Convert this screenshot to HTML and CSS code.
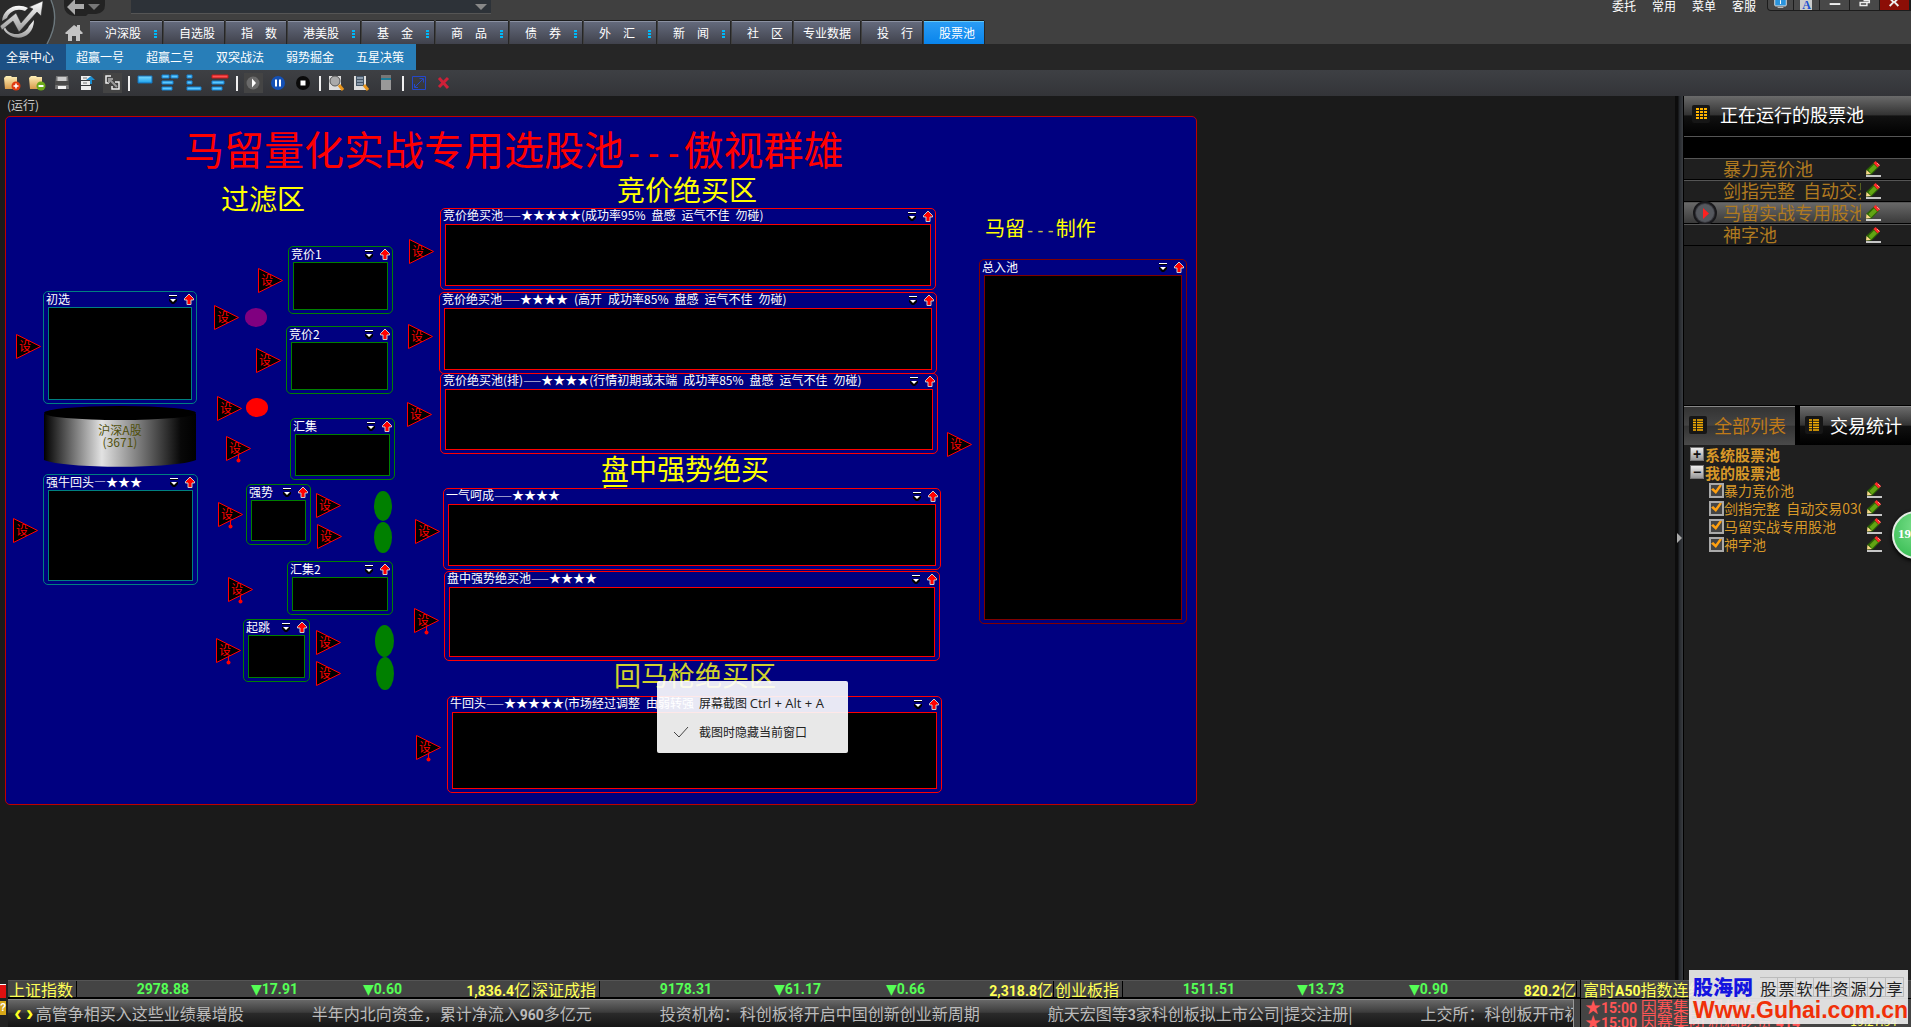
FILE: index.html
```html
<!DOCTYPE html>
<html lang="zh-CN">
<head>
<meta charset="utf-8">
<title>股票池</title>
<link rel="stylesheet" href="styles.css">
</head>
<body>
<svg class="defs" aria-hidden="true">
  <defs>
    <linearGradient id="silver" x1="0" y1="0" x2="0" y2="1"><stop offset="0" stop-color="#fff"/><stop offset="1" stop-color="#999"/></linearGradient>
    <linearGradient id="folder" x1="0" y1="0" x2="0" y2="1"><stop offset="0" stop-color="#fff0b8"/><stop offset="1" stop-color="#d89a4a"/></linearGradient>
    <linearGradient id="sky" x1="0" y1="0" x2="0" y2="1"><stop offset="0" stop-color="#7fdcff"/><stop offset="1" stop-color="#1aa0ec"/></linearGradient>
    <linearGradient id="drum" x1="0" y1="0" x2="1" y2="0"><stop offset="0" stop-color="#000"/><stop offset=".38" stop-color="#e2e2e2"/><stop offset=".9" stop-color="#080808"/><stop offset="1" stop-color="#000"/></linearGradient>
    <symbol id="pencil" viewBox="0 0 16 16"><path d="M1 15h15" stroke="#fff" stroke-width="1.500"/><path d="M1.500 8.500 9.500 1l5 4.500-8 8L1 13.500z" fill="#2c6404"/><path d="M3.500 9 9 3.500l3 3-6 6z" fill="#62a414"/><path d="m1 13.500.5-4.500 4.500 4z" fill="#f7d68a"/><path d="M8.500 2 10.500 0l4.500 4-2.500 2.500z" fill="#ff2a2a"/><path d="M12 2 14.500 4.500" stroke="#ff9a90"/></symbol>
    <symbol id="grid9" viewBox="0 0 18 18"><rect width="18" height="18" rx="2" fill="#161616"/><path d="M4 4h3M8 4h3M12 4h3M4 7h3M8 7h3M12 7h3M4 10h3M8 10h3M12 10h3M4 13h3M8 13h3M12 13h3" stroke="#ffb400" stroke-width="2"/></symbol>
    <symbol id="listing" viewBox="0 0 18 18"><rect width="18" height="18" rx="2" fill="#161616"/><path d="M4 4h3M4 6.500h3M4 9h3M4 11.500h3M4 14h3M8 4h6M8 6.500h6M8 9h6M8 11.500h6M8 14h6" stroke="#ffb400" stroke-width="1.500"/></symbol>
  </defs>
</svg>

<header class="top">
  <svg class="logo" viewBox="0 0 56 44" aria-label="标志"><path d="M0 0h52c6 14 4 30-4 44H0z" fill="#2a2a2a"/><path d="M51 0c6 14 4 30-4 44" fill="none" stroke="#6c777c" stroke-width="1.500"/><path d="M2 21C3 9 16 2 28 8l-3 3C17 8 10 11 7 18z" fill="url(#silver)"/><path d="M5 27c3 9 19 10 24-1l5-6c0 15-13 21-23 16-4-2-7-5-8-8z" fill="url(#silver)"/><path d="M0 26 16 13l5 10L33 9l-4-2L43 1l-2 15-4-4-18 20-6-11L2 30z" fill="url(#silver)" stroke="#2a2a2a" stroke-width=".5"/></svg>
  <div class="top-main">
    <div class="top-row">
      <button class="back" aria-label="后退"><svg viewBox="0 0 43 17"><path d="M1 0v6a10 10 0 0 0 10 10h12l2-2h8q9-1 9-9V0z" fill="#232323"/><path d="m4 7 8-8v5h9v5h-9v6z" fill="#aaa"/><path d="M25 4h12l-6 6z" fill="#777"/></svg></button>
      <div class="search"><input type="text" aria-label="搜索"><i class="caret"></i></div>
      <div class="links"><a href="#">委托</a><a href="#">常用</a><a href="#">菜单</a><a href="#">客服</a></div>
      <div class="win">
        <button aria-label="屏幕"><svg viewBox="0 0 26 10"><rect x="7" y="-4" width="12" height="10" rx="1" fill="#2a94dc" stroke="#ddd"/><path d="M10 7.500h6" stroke="#ccc"/><path d="M13 0v4" stroke="#fff"/></svg></button>
        <button class="letter" aria-label="字体">A</button>
        <button aria-label="最小化"><svg viewBox="0 0 30 10"><path d="M10 4h11" stroke="#eee" stroke-width="2"/></svg></button>
        <button aria-label="还原"><svg viewBox="0 0 30 10"><path d="M10.500 2.500h7v3h-7zM14 .5h6v2h-2" fill="none" stroke="#eee" stroke-width="1.500"/></svg></button>
        <button class="close" aria-label="关闭"><svg viewBox="0 0 30 10"><path d="m10 6 4-4-4-4M19 6l-4-4 4-4M13 2h3" fill="none" stroke="#eee" stroke-width="2"/></svg></button>
      </div>
    </div>
    <nav class="tabs">
      <button class="home" aria-label="首页"><svg viewBox="0 0 18 18"><path d="M0 9 9 1l3 2V1h3v5l3 3-1 1h-2v7h-4v-5H7v5H3v-7H1z" fill="#c4c4c4"/></svg></button>
      <a class="tab more" href="#">沪深股</a>
      <a class="tab" href="#">自选股</a>
      <a class="tab" href="#">指　数</a>
      <a class="tab more" href="#">港美股</a>
      <a class="tab more" href="#">基　金</a>
      <a class="tab more" href="#">商　品</a>
      <a class="tab more" href="#">债　券</a>
      <a class="tab more" href="#">外　汇</a>
      <a class="tab more" href="#">新　闻</a>
      <a class="tab" href="#">社　区</a>
      <a class="tab wide" href="#">专业数据</a>
      <a class="tab" href="#">投　行</a>
      <a class="tab active" href="#">股票池</a>
    </nav>
  </div>
</header>

<nav class="subnav">
  <a class="current" href="#">全景中心</a><a href="#">超赢一号</a><a href="#">超赢二号</a><a href="#">双突战法</a><a href="#">弱势掘金</a><a href="#">五星决策</a>
</nav>

<div class="toolbar">
  <button aria-label="新建"><svg viewBox="0 0 18 18"><path d="M2 15 1 4l2-2h5l1 1h5v12z" fill="url(#folder)"/><circle cx="13" cy="12" r="4.500" fill="#e03a10"/><path d="M10.500 12h5M13 9.500v5" stroke="#fff" stroke-width="1.500"/></svg></button>
  <button aria-label="删除"><svg viewBox="0 0 18 18"><path d="M2 15 1 4l2-2h5l1 1h5v12z" fill="url(#folder)"/><circle cx="13" cy="12" r="4.500" fill="#6ba818"/><path d="M10.500 12h5" stroke="#fff" stroke-width="2"/></svg></button>
  <button aria-label="保存"><svg viewBox="0 0 18 18"><path d="M3 2h12l1 13H2z" fill="#777"/><path d="M4.500 3h9v4h-9z" fill="#ccc"/><path d="M2 7h14v4H2z" fill="#4a4a4a"/><path d="M5 12h8v3H5z" fill="#f4f4f4"/></svg></button>
  <button aria-label="上传"><svg viewBox="0 0 18 18"><path d="M3 2h10v4H3zM3 7h9v4H3zM3 12h10v4H3z" fill="#eee"/><path d="M5 4h4M5 9h4" stroke="#777"/><path d="m8 6 5-4 4 4h-3v4h-2V6z" fill="#1c8ed0"/></svg></button>
  <button class="held" aria-label="全屏"><svg viewBox="0 0 18 18"><path d="M8 2H3v7h3M12 8h4v7H9v-3" fill="none" stroke="#eee" stroke-width="1.500"/><path d="m6 5 8 8M6 9V5h4" fill="none" stroke="#999" stroke-width="2"/></svg></button>
  <i class="sep"></i>
  <button aria-label="平铺"><svg viewBox="0 0 18 18"><path d="M2 2h14v7H2z" fill="url(#sky)" stroke="#1470b8"/></svg></button>
  <button aria-label="上对齐"><svg viewBox="0 0 18 18"><path d="M1 1h7v3H1zM10 1h7v3h-7zM1 7h11v3H1zM1 13h10v3H1z" fill="#5cc8ff" stroke="#1480d0"/></svg></button>
  <button aria-label="左对齐"><svg viewBox="0 0 18 18"><path d="M1 1h5v3H1zM1 7h5v3H1zM1 13h14v3H1z" fill="#5cc8ff" stroke="#1480d0"/></svg></button>
  <button aria-label="等宽"><svg viewBox="0 0 18 18"><path d="M1 1h16v3H1z" fill="#ff5050" stroke="#c41818"/><path d="M1 7h12v3H1zM1 13h10v3H1z" fill="#5cc8ff" stroke="#1480d0"/></svg></button>
  <i class="sep"></i>
  <button class="held" aria-label="运行"><svg viewBox="0 0 18 18"><circle cx="9" cy="9" r="6.500" fill="#6a6a6a"/><path d="M8 4.500v9l4-4.500z" fill="#fff"/></svg></button>
  <button aria-label="暂停"><svg viewBox="0 0 18 18"><circle cx="9" cy="9" r="7" fill="#1450b4"/><path d="M7 5.500v7M11 5.500v7" stroke="#fff" stroke-width="2"/></svg></button>
  <button aria-label="停止"><svg viewBox="0 0 18 18"><circle cx="9" cy="9" r="7" fill="#0a0a0a"/><path d="M6.500 6.500h5v5h-5z" fill="#fff"/></svg></button>
  <i class="sep"></i>
  <button aria-label="查找"><svg viewBox="0 0 18 18"><path d="M2 2h12v14H2z" fill="#ddd"/><circle cx="8" cy="7" r="5" fill="#aaa" stroke="#555"/><path d="m12 11 4 5" stroke="#e8951c" stroke-width="3"/></svg></button>
  <button aria-label="详查"><svg viewBox="0 0 18 18"><path d="M2 2h12v14H2z" fill="#ddd"/><path d="M4 2h8v10H4z" fill="#456"/><path d="M5 4h6M5 7h6M5 10h6" stroke="#cde"/><path d="m12 11 4 5" stroke="#e8951c" stroke-width="3"/></svg></button>
  <button aria-label="清空"><svg viewBox="0 0 18 18"><path d="M4 1h10v3H4z" fill="#777"/><path d="M4 4h10v2H4z" fill="#1d7c98"/><path d="M4 6h10v10H4z" fill="#999"/></svg></button>
  <i class="sep"></i>
  <button aria-label="缩放"><svg viewBox="0 0 18 18"><path d="M2.500 2.500h13v13h-13zM5 13l8-8M9.500 4.500h4v4M4.500 10v3.500H8" fill="none" stroke="#2448c8"/></svg></button>
  <button aria-label="关闭池"><svg viewBox="0 0 18 18"><path d="m4 4 9 10M13 4 4 13" stroke="#d02038" stroke-width="3"/></svg></button>
</div>

<div class="workspace">
  <main class="board">
    <p class="state">(运行)</p>
    <div class="canvas" id="canvas">
      <h1 class="headline">马留量化实战专用选股池<span class="dash">---</span>傲视群雄</h1>
      <h2 class="zone filter">过滤区</h2>
      <h2 class="zone bid">竞价绝买区</h2>
      <h2 class="zone strong">盘中强势绝买区</h2>
      <h2 class="zone rebound">回马枪绝买区</h2>
      <p class="author">马留<span class="dash">---</span>制作</p>
      <div class="drum">
        <svg viewBox="0 0 152 62"><path d="M0 8v46c20 9 132 9 152 0V8z" fill="url(#drum)"/><ellipse cx="76" cy="7" rx="76" ry="7" fill="#000"/></svg>
        <span>沪深A股<br>(3671)</span>
      </div>
      <menu class="popup">
        <li><button>屏幕截图 <kbd>Ctrl + Alt + A</kbd></button></li>
        <li><button><svg viewBox="0 0 16 12"><path d="m1 6 5 5 9-10" fill="none" stroke="#444"/></svg>截图时隐藏当前窗口</button></li>
      </menu>
    </div>
  </main>

  <aside class="side">
    <button class="splitter" aria-label="折叠"></button>
    <div class="side-body">
      <section class="running">
        <h2 class="side-head"><svg><use href="#grid9"/></svg>正在运行的股票池</h2>
        <div class="blank"></div>
        <ul class="run-list">
          <li><span>暴力竞价池</span><button aria-label="编辑"><svg><use href="#pencil"/></svg></button></li>
          <li><span>剑指完整&nbsp; 自动交易0306</span><button aria-label="编辑"><svg><use href="#pencil"/></svg></button></li>
          <li class="on"><svg class="play" viewBox="0 0 24 24"><circle cx="12" cy="12" r="11" fill="#3a3a40" stroke="#19191c" stroke-width="2"/><circle cx="12" cy="12" r="9" fill="#55585e"/><path d="M10 7v11l6-5.500z" fill="#ff2020"/></svg><span>马留实战专用股池</span><button aria-label="编辑"><svg><use href="#pencil"/></svg></button></li>
          <li><span>神字池</span><button aria-label="编辑"><svg><use href="#pencil"/></svg></button></li>
        </ul>
      </section>
      <section class="lists">
        <div class="list-tabs">
          <button class="picked"><svg><use href="#listing"/></svg>全部列表</button>
          <button><svg><use href="#listing"/></svg>交易统计</button>
        </div>
        <ul class="tree">
          <li class="branch"><button aria-label="展开">+</button>系统股票池</li>
          <li class="branch"><button aria-label="收起">−</button>我的股票池</li>
          <li><label><input type="checkbox" checked><span>暴力竞价池</span></label><button class="edit" aria-label="编辑"><svg><use href="#pencil"/></svg></button></li>
          <li><label><input type="checkbox" checked><span>剑指完整&nbsp; 自动交易0306</span></label><button class="edit" aria-label="编辑"><svg><use href="#pencil"/></svg></button></li>
          <li><label><input type="checkbox" checked><span>马留实战专用股池</span></label><button class="edit" aria-label="编辑"><svg><use href="#pencil"/></svg></button></li>
          <li><label><input type="checkbox" checked><span>神字池</span></label><button class="edit" aria-label="编辑"><svg><use href="#pencil"/></svg></button></li>
        </ul>
        <div class="bubble">19</div>
      </section>
    </div>
  </aside>
</div>

<footer class="status">
  <div class="edge"><i class="alert"></i><i class="help">?</i></div>
  <div class="market">
    <div class="quotes">
      <div class="quote"><b>上证指数</b><span>2978.88</span><span>▼17.91</span><span>▼0.60</span><em>1,836.4<i>亿</i></em></div>
      <div class="quote"><b>深证成指</b><span>9178.31</span><span>▼61.17</span><span>▼0.66</span><em>2,318.8<i>亿</i></em></div>
      <div class="quote"><b>创业板指</b><span>1511.51</span><span>▼13.73</span><span>▼0.90</span><em>820.2<i>亿</i></em></div>
    </div>
    <div class="news">
      <button aria-label="上一条">‹</button><button aria-label="下一条">›</button>
      <div class="feed"><a href="#">高管争相买入这些业绩暴增股</a><a href="#">半年内北向资金，累计净流入<b>960</b>多亿元</a><a href="#">投资机构：科创板将开启中国创新创业新周期</a><a href="#">航天宏图等<b>3</b>家科创板拟上市公司|提交注册|</a><a href="#">上交所：科创板开市初期</a></div>
    </div>
  </div>
  <div class="extra">
    <div class="future">富时<b>A50</b>指数连续</div>
    <div class="alerts"><p>★<b>15:00</b> 因赛集团 机构吃货 <b>4</b></p><p>★<b>15:00</b> 因赛集团 机构吃货 <b>414</b></p></div>
    <time class="clock">19:27:54</time>
    <div class="badge">
      <div class="badge-top"><strong>股海网</strong><span class="cells"><i>股</i><i>票</i><i>软</i><i>件</i><i>资</i><i>源</i><i>分</i><i>享</i></span></div>
      <a href="#">Www.Guhai.com.cn</a>
    </div>
  </div>
</footer>
<script src="app.js"></script>
</body>
</html>
```
FILE: styles.css
```css
* { box-sizing: border-box; margin: 0; padding: 0; }
body {
  display: flex; flex-direction: column; min-height: 100vh; overflow: hidden;
  background: #1a1a1a; color: #fff;
  font: 12px/16px "Noto Sans CJK SC", sans-serif;
}
button, input { font: inherit; color: inherit; background: none; border: 0; }
a { color: inherit; text-decoration: none; }
ul, menu { list-style: none; }
svg { display: block; }
i, em { font-style: normal; }
.defs { position: absolute; width: 0; height: 0; }
.dash { font-family: "DejaVu Sans Mono", monospace; }

/* header */
.top { display: flex; height: 44px; background: #404040; }
.logo { width: 56px; height: 44px; flex: none; }
.top-main { flex: 1; display: flex; flex-direction: column; min-width: 0; }
.top-row { height: 21px; display: flex; align-items: flex-start; }
.back { width: 43px; height: 17px; margin: 0 25px 0 7px; }
.back svg { width: 43px; height: 17px; }
.search { width: 360px; height: 14px; display: flex; align-items: center; background: #2d3238; border-bottom: 1px solid #555; }
.search input { flex: 1; height: 12px; outline: 0; }
.caret { border: 6px solid transparent; border-top-color: #888; border-bottom: 0; margin-right: 4px; }
.links { display: flex; gap: 16px; margin-left: auto; line-height: 11px; height: 14px; margin-right: 11px; }
.win { display: flex; height: 11px; background: #484848; border: 1px solid #1c1c1c; border-top: 0; border-radius: 0 0 0 4px; }
.win button { width: 30px; height: 10px; border-right: 1px solid #1c1c1c; overflow: hidden; }
.win button:nth-child(-n+2) { width: 26px; }
.win .letter { font: bold 12px/7px "Liberation Serif", serif; color: #1c50d0; background: linear-gradient(90deg, #484848 6px, #ccc 6px, #ccc 18px, #484848 18px); }
.win .close { background: #8c0e06; }
.win svg { height: 10px; width: 100%; }

.tabs { display: flex; gap: 2px; height: 23px; }
.home { width: 32px; padding-left: 9px; }
.home svg { width: 18px; height: 18px; }
.tab {
  position: relative; width: 60px; height: 23px; padding-left: 15px; line-height: 22px; white-space: nowrap;
  background: linear-gradient(#646a7c, #40424c); border-top: 1px solid #8b91a2;
  box-shadow: 0 -1px #1c1c1c, 1px 0 #262626;
}
.tab.more { width: 72px; }
.tab.more::after { content: ""; position: absolute; right: 5px; top: 8px; width: 3px; height: 9px; background: repeating-linear-gradient(#00b8f8 0 2px, transparent 2px 3px); }
.tab.wide { width: 66px; padding-left: 9px; }
.tab.active { background: linear-gradient(#2a9cf4, #0884ec); border-top-color: #66c8f8; }

.subnav { display: flex; height: 26px; background: #262626; }
.subnav a { width: 70px; padding-left: 10px; line-height: 25px; background: #287eb8; }
.subnav .current { width: 66px; padding-left: 6px; background: #1c5084; }

.toolbar { display: flex; align-items: center; height: 26px; background: linear-gradient(#3e4044, #333438); }
.toolbar button { width: 25px; height: 20px; padding: 0 3px; }
.toolbar button svg { width: 18px; height: 18px; }
.toolbar .held { background: linear-gradient(90deg, transparent 3px, #444 3px, #444 22px, transparent 22px); }
.sep { width: 2px; height: 15px; margin: 0 3px; background: #f0f0f0; }

/* workspace */
.workspace { flex: 1; display: flex; min-height: 0; }
.board { flex: 1; min-width: 0; overflow: hidden; }
.state { height: 20px; padding-left: 7px; line-height: 18px; color: #ccc; }
.canvas { position: relative; width: 1192px; height: 689px; margin-left: 5px; background: #000080; border: 1px solid #c00000; border-radius: 5px; }
.headline, .zone, .author, .drum, .node, .cond, .blob, .popup { position: absolute; }
.headline { left: 178px; top: 7px; font-size: 40px; line-height: 48px; font-weight: 400; color: #f00; white-space: nowrap; }
.headline .dash { font-size: 33px; }
.zone { font-size: 28px; line-height: 28px; font-weight: 400; color: #ff0; white-space: nowrap; }
.filter { left: 215px; top: 67px; }
.bid { left: 611px; top: 58px; }
.strong { left: 595px; top: 337px; width: 170px; height: 34px; overflow: hidden; white-space: normal; }
.rebound { left: 608px; top: 544px; font-size: 27px; color: #d2d22c; }
.author { left: 979px; top: 99px; font-size: 20px; line-height: 24px; color: #ff0; }
.author .dash { font-size: 17px; color: #c4c444; }
.drum { left: 38px; top: 289px; width: 152px; height: 62px; }
.drum svg { width: 152px; height: 62px; position: absolute; }
.drum span { position: relative; display: block; padding-top: 18px; text-align: center; line-height: 12px; color: #50500c; }

.node { border: 1px solid var(--line); border-radius: 5px; display: flex; flex-direction: column; padding: 0 4px 3px; background: #000080; }
.node header { display: flex; align-items: center; height: 15px; gap: 6px; margin: 0 -2px; padding-bottom: 2px; white-space: nowrap; line-height: 13px; }
.node h3 { flex: 1; display: flex; gap: 6px; font-size: 12px; font-weight: 400; min-width: 0; }
.node h3 .rule { font-size: 9px; font-weight: 700; }
.node header button { width: 10px; height: 12px; }
.node header svg { width: 10px; height: 12px; }
.node .body { flex: 1; background: #000; border: 1px solid var(--line); }
.teal { --line: #008080; }
.green { --line: #008000; }
.red { --line: #f00; }
.maroon { --line: #800000; }
.cond { width: 26px; height: 30px; color: #f00; }
.cond svg { position: absolute; left: 0; top: 0; width: 26px; height: 30px; }
.cond span { position: absolute; left: 3px; top: 5px; font-size: 12px; line-height: 14px; }
.blob { border-radius: 50%; }
.purple { background: #800080; }
.scarlet { background: #f00; }
.leaf { background: #008000; }

.popup { left: 651px; top: 564px; width: 191px; height: 72px; padding: 7px 0; background: rgba(255, 255, 255, .91); border-radius: 2px; z-index: 5; }
.popup button { position: relative; display: block; width: 100%; height: 29px; padding-left: 42px; text-align: left; color: #222; white-space: nowrap; }
.popup kbd { font: 13px "Open Sans", sans-serif; }
.popup svg { position: absolute; left: 16px; top: 9px; width: 16px; height: 12px; }

/* side */
.side { display: flex; width: 236px; background: #1f1f1f; }
.splitter { position: relative; width: 9px; background: linear-gradient(90deg, #0c0c0c 3px, #23262a 4px, #3a3d42 8px, #000 8px); }
.splitter::after { content: ""; position: absolute; left: 2px; top: 437px; border: 5px solid transparent; border-left: 5px solid #aaa; border-right: 0; }
.side-body { flex: 1; min-width: 0; display: flex; flex-direction: column; }
.running { height: 309px; font-size: 18px; }
.side-head { display: flex; align-items: center; gap: 10px; height: 41px; padding: 0 0 4px 8px; font-size: 18px; font-weight: 400; border-bottom: 1px solid #555; background: linear-gradient(#6a6a6a, #333 47%, #111 50%, #000); }
.side-head svg, .list-tabs svg { width: 18px; height: 18px; flex: none; }
.blank { height: 21px; background: #000; }
.run-list li { position: relative; display: flex; align-items: center; height: 22px; padding-left: 39px; border-top: 1px solid #555; border-bottom: 1px solid #000; color: #b07a20; line-height: 20px; }
.run-list li.on { background: linear-gradient(#686868, #3a3a3a); }
.run-list span { width: 138px; overflow: hidden; white-space: nowrap; margin-right: 4px; padding-bottom: 2px; line-height: 18px; }
.run-list button, .run-list button svg, .edit, .edit svg { width: 16px; height: 16px; }
.play { position: absolute; left: 9px; top: -2px; width: 24px; height: 24px; }
.lists { position: relative; flex: 1; overflow: hidden; }
.list-tabs { display: flex; gap: 5px; background: #000; height: 40px; padding-top: 1px; }
.list-tabs button { flex: 1; display: flex; align-items: center; gap: 7px; padding: 0 0 3px 5px; font-size: 18px; white-space: nowrap; background: linear-gradient(#6a6a6a, #333 48%, #111 50%, #000); border-top: 1px solid #888; }
.list-tabs .picked { color: #c07a18; background: linear-gradient(#333, #444 48%, #333 50%, #4a4a4a); }
.tree { padding-left: 6px; color: #d89828; font-size: 14px; }
.tree li { display: flex; align-items: center; height: 18px; line-height: 17px; }
.tree .branch { font-size: 15px; font-weight: 700; }
.branch button { width: 14px; height: 14px; margin-right: 1px; background: linear-gradient(#eee, #999); border: 1px solid #777; color: #111; font: bold 14px/11px "Liberation Sans", sans-serif; }
.tree label { display: flex; align-items: center; padding-left: 19px; width: 171px; margin-right: 5px; overflow: hidden; white-space: nowrap; }
.tree input { appearance: none; flex: none; width: 15px; height: 15px; background: #444; border: 2px solid #aaa; }
.tree input:checked::before { content: ""; display: block; width: 11px; height: 10px; background: #ffa010; clip-path: polygon(0 50%, 20% 35%, 42% 58%, 80% 0, 100% 10%, 45% 95%); }
.bubble { position: absolute; left: 208px; top: 106px; width: 48px; height: 48px; padding-left: 4px; border: 2px solid #e4ece4; border-radius: 50%; background: radial-gradient(circle at 55% 30%, #7ce08c, #2fb84c); font: bold 13px/42px "Liberation Serif", serif; box-shadow: 0 2px 4px #000; }

/* status */
.status { display: flex; height: 47px; background: #444; font-size: 16px; white-space: nowrap; }
.edge { width: 8px; padding-top: 4px; background: #222; overflow: hidden; }
.edge i { display: block; height: 14px; width: 6px; margin-bottom: 3px; font: bold 10px/14px "Liberation Sans", sans-serif; }
.alert { background: #e01010; border-top: 1px solid #fff; }
.help { background: #d8a818; color: #fff; }
.market { flex: 1; min-width: 0; display: flex; flex-direction: column; }
.quotes { display: flex; height: 19px; border-top: 1px solid #555; border-bottom: 2px solid #000; }
.quote { flex: none; width: 523px; display: grid; grid-template-columns: 69px 112px 109px 104px 128px; line-height: 16px; text-align: right; border-right: 1px solid #000; }
.quote b { font: inherit; color: #ff5; text-align: left; padding-left: 1px; border-right: 1px solid #000; }
.quote span, .quote em { color: #5f5; font: 700 14px/16px Roboto, "DejaVu Sans", sans-serif; }
.quote em { color: #ff5; }
.quote em i { font: 16px/16px "Noto Sans CJK SC", sans-serif; }
.news { display: flex; flex: 1; align-items: center; padding-left: 4px; margin-right: 6px; background: linear-gradient(#686868, #3c3c3c 45%, #2a2a2a 50%, #161616); border-top: 1px solid #888; border-right: 1px solid #999; overflow: hidden; }
.news button { width: 12px; color: #ff2; font: bold 22px/20px "Liberation Sans", sans-serif; }
.feed { display: flex; gap: 68px; color: #bbb; overflow: hidden; line-height: 22px; padding-bottom: 2px; }
.feed a { flex: none; }
.feed a:last-child { flex: 0 1 auto; min-width: 0; overflow: hidden; }
.feed b, .extra b { font: 700 14px/14px Roboto, sans-serif; }
.extra { position: relative; width: 331px; border-left: 1px solid #000; }
.future { height: 19px; line-height: 16px; padding-left: 2px; color: #ff5; border-top: 1px solid #555; border-bottom: 1px solid #000; }
.alerts { height: 28px; padding-left: 4px; color: #f55; font-size: 16px; line-height: 15px; overflow: hidden; }
.alerts p { height: 15px; }
.clock { position: absolute; right: 14px; bottom: 0; font-size: 12px; line-height: 12px; color: #ff5; }
.badge { position: absolute; left: 108px; top: -10px; width: 219px; height: 54px; padding: 5px 4px 0; background: rgba(240, 240, 240, .9); }
.badge-top { display: flex; justify-content: space-between; line-height: 24px; }
.badge strong { font-size: 20px; font-weight: 900; color: #1414e0; }
.cells { display: flex; font-size: 16px; color: #222; }
.cells i { width: 18px; height: 20px; margin-top: 2px; line-height: 20px; text-align: center; background: linear-gradient(transparent 9px, #bbb 9px, #bbb 10px, transparent 10px); border: 1px solid #bbb; border-left: 0; }
.badge a { display: block; font: 900 23px/23px "Liberation Sans", sans-serif; color: #f03008; }
```
FILE: app.js
```js
// Pool nodes: [colour, x, y, width, height, title parts]
const ORIGIN = { x: 6, y: 117 };
const RULE = '<span class="rule">——</span>';
const pools = [
  ['teal', 43, 291, 154, 113, ['初选']],
  ['teal', 43, 474, 155, 111, ['强牛回头—★★★']],
  ['green', 288, 246, 105, 68, ['竞价1']],
  ['green', 286, 326, 107, 68, ['竞价2']],
  ['green', 290, 418, 105, 62, ['汇集']],
  ['green', 246, 484, 65, 61, ['强势']],
  ['green', 287, 561, 106, 54, ['汇集2']],
  ['green', 243, 619, 67, 63, ['起跳']],
  ['red', 440, 208, 496, 82, ['竞价绝买池' + RULE + '★★★★★(成功率95%', '盘感', '运气不佳', '勿碰)']],
  ['red', 439, 292, 498, 82, ['竞价绝买池' + RULE + '★★★★', '(高开', '成功率85%', '盘感', '运气不佳', '勿碰)']],
  ['red', 440, 373, 498, 81, ['竞价绝买池(排)' + RULE + '★★★★(行情初期或末端', '成功率85%', '盘感', '运气不佳', '勿碰)']],
  ['red', 443, 488, 498, 82, ['一气呵成' + RULE + '★★★★']],
  ['red', 444, 571, 496, 90, ['盘中强势绝买池' + RULE + '★★★★']],
  ['red', 447, 696, 495, 97, ['牛回头' + RULE + '★★★★★(市场经过调整', '由弱转强', '勿碰)']],
  ['maroon', 979, 259, 208, 365, ['总入池']],
];
// Condition arrows: [x, y, has pin]
const conds = [
  [16, 334], [13, 518], [214, 305], [217, 396], [226, 436, 1], [218, 502, 1], [228, 577, 1], [216, 638, 1],
  [258, 268], [256, 348], [409, 239], [408, 324], [407, 402], [316, 493], [317, 524], [316, 630], [316, 661],
  [415, 519], [414, 608, 1], [416, 735, 1], [947, 432],
];
const blobs = [
  ['purple', 245, 308, 22, 19], ['scarlet', 246, 398, 22, 19],
  ['leaf', 374, 491, 18, 30], ['leaf', 374, 522, 18, 31], ['leaf', 375, 625, 19, 32], ['leaf', 376, 657, 18, 33],
];

const canvas = document.getElementById('canvas');
const DROP = '<svg viewBox="0 0 10 12"><path d="M1 2h8v2H1zM1 6h8v2L6 11H4L1 8z" fill="#000"/><path d="M1 2.500h8" stroke="#fff"/><path d="M2 6h6L5 9z" fill="#fff"/></svg>';
const UP = '<svg viewBox="0 0 10 12"><path d="M5 1 .5 5.500V7H3v4.500h4V7h2.500V5.500z" fill="#f00" stroke="#ccc"/></svg>';

function place(el, x, y, w, h) {
  el.style.left = x - ORIGIN.x + 'px';
  el.style.top = y - ORIGIN.y + 'px';
  if (w) { el.style.width = w + 'px'; el.style.height = h + 'px'; }
  canvas.append(el);
}

for (const [tone, x, y, w, h, parts] of pools) {
  const el = document.createElement('section');
  el.className = 'node ' + tone;
  el.innerHTML = '<header><h3>' + parts.map(p => '<span>' + p + '</span>').join('') + '</h3><button aria-label="菜单">' + DROP +
    '</button><button aria-label="上移">' + UP + '</button></header><div class="body"></div>';
  place(el, x, y, w, h);
}
for (const [x, y, pin] of conds) {
  const el = document.createElement('button');
  el.className = 'cond';
  el.innerHTML = '<svg viewBox="0 0 26 30"><path d="M.5 .5v24l24-12z" fill="#000" stroke="#f00"/>' +
    (pin ? '<path d="M12.500 18v6" stroke="#f00"/><circle cx="12.500" cy="24.500" r="2" fill="#f00"/>' : '') + '</svg><span>设</span>';
  place(el, x, y);
}
for (const [tone, x, y, w, h] of blobs) {
  const el = document.createElement('div');
  el.className = 'blob ' + tone;
  place(el, x, y, w, h);
}
```
